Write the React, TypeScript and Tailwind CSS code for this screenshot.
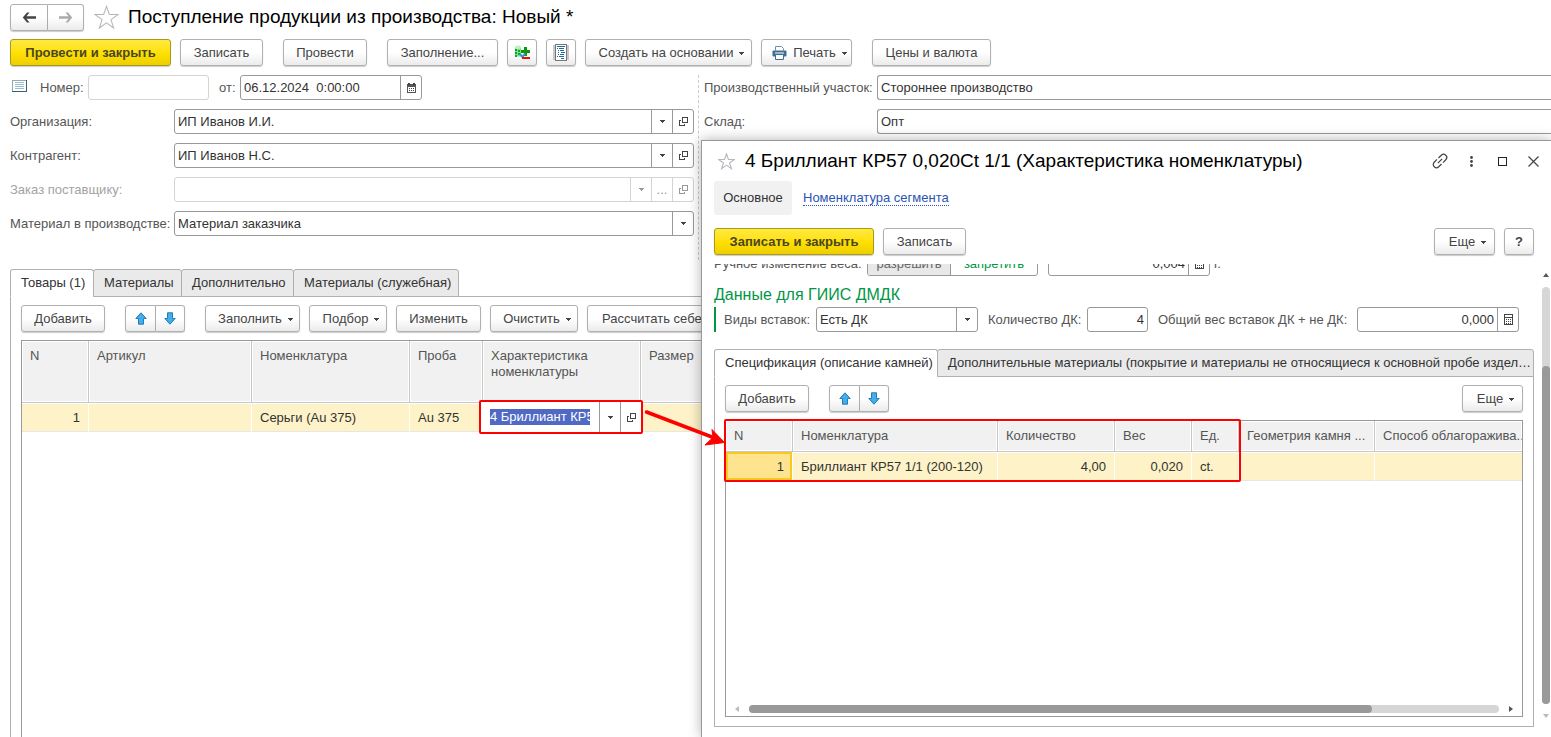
import { ReactNode } from "react";
import clsx from "clsx";

function Caret() {
  return (
    <svg width="5" height="3" viewBox="0 0 5 3" className="shrink-0" shapeRendering="crispEdges">
      <path d="M0 0h5v1h-1v1h-1v1h-1v-1h-1v-1h-1z" fill="currentColor" />
    </svg>
  );
}

function ScrollArrow({ className }: { className: string }) {
  return (
    <span className={clsx("flex size-2 shrink-0 items-center justify-center", className)}>
      <svg width="6" height="4" viewBox="0 0 6 4">
        <path d="M0 0h6L3 4z" fill="currentColor" />
      </svg>
    </span>
  );
}

function OpenIcon() {
  return (
    <svg width="9" height="9" viewBox="0 0 9 9" fill="none" stroke="currentColor" shapeRendering="crispEdges">
      <path d="M3.5 0.5h5v5h-5z" />
      <path d="M2 3.5H0.5v5h5V7" />
    </svg>
  );
}

function CalendarIcon() {
  return (
    <svg width="9" height="10" viewBox="0 0 9 10" shapeRendering="crispEdges">
      <path d="M0 1h9v9H0z" fill="#555" />
      <path d="M1 4h7v5H1z" fill="#fff" />
      <path d="M1 0h2v2H1z M6 0h2v2H6z" fill="#444" />
      <path d="M2 5h1v1H2z M4 5h1v1H4z M6 5h1v1H6z M2 7h1v1H2z M4 7h1v1H4z M6 7h1v1H6z" fill="#444" />
    </svg>
  );
}

function CalculatorIcon() {
  return (
    <svg width="9" height="11" viewBox="0 0 9 11" shapeRendering="crispEdges">
      <path d="M0.5 0.5h8v10h-8z M0 3.5h9" fill="none" stroke="#444" />
      <path d="M2 5h1v1H2z M4 5h1v1H4z M6 5h1v1H6z M2 7h1v1H2z M4 7h1v1H4z M6 7h1v1H6z M2 9h1v1H2z M4 9h1v1H4z M6 9h1v1H6z" fill="#444" />
    </svg>
  );
}

function StarIcon({ size }: { size: number }) {
  return (
    <svg width={size} height={size} viewBox="0 0 24 24" fill="none" stroke="#b4b9be" strokeWidth={size < 20 ? 1.6 : 1}>
      <path d="M12 1.2l2.7 7.9h8.4l-6.8 4.9 2.6 8.1-6.9-5-6.9 5 2.6-8.1L.9 9.1h8.4z" />
    </svg>
  );
}

function BlueArrow({ down }: { down?: boolean }) {
  return (
    <svg width="12" height="13" viewBox="0 0 12 13" className={clsx(down && "rotate-180")}>
      <path d="M6 .8L11.2 6.5H8.5v5.7h-5V6.5H.8z" fill="#41aef0" stroke="#2a7aac" strokeWidth="1" />
    </svg>
  );
}

function NavArrow({ right, color }: { right?: boolean; color: string }) {
  return (
    <svg width="15" height="11" viewBox="0 0 15 11" className={clsx(right && "rotate-180")}>
      <path d="M5 .5h2.500L4.500 4.300H14v2.400H4.500l3 3.800H5L.8 5.500z" fill={color} />
    </svg>
  );
}

function AddRemoveIcon() {
  return (
    <svg width="17" height="16" viewBox="0 0 17 16">
      <path d="M1 2.500h6v9H1z" fill="#7fe08a" />
      <ellipse cx="4" cy="2.300" rx="3" ry="1.800" fill="#b9f2bb" />
      <path d="M1 4h2v2H1zM1 7h2v2H1zM1 10h2v2H1zM4 5h2v2H4zM4 8h2v2H4z" fill="#12a52c" />
      <path d="M10 2h3v3h3v3h-3v3h-3V8H7V5h3z" fill="#0a9a0a" />
      <path d="M6 9l2.500 3L11 8.500" fill="none" stroke="#3c8fd6" strokeWidth="2" />
      <path d="M8 12h8v2H8z" fill="#f20d0d" />
    </svg>
  );
}

function ReportIcon() {
  return (
    <svg width="16" height="17" viewBox="0 0 16 17" shapeRendering="crispEdges">
      <path d="M0 1h2v15H0z M14 1h2v15h-2z" fill="#c9c9c9" />
      <path d="M2 0h12v17H2z" fill="#777" />
      <path d="M3 1h10v15H3z" fill="#fff" />
      <path d="M4 2h8v1H4z M6 4h5v1H6z M7 6h4v1H7z M8 8h4v1H8z M7 10h4v1H7z M6 12h5v1H6z M8 14h3v1H8z" fill="#1d6b96" />
      <path d="M4 4h1v1H4z M5 6h1v1H5z M5 8h1v1H5z M5 10h1v1H5z M4 12h1v1H4z" fill="#1d6b96" />
    </svg>
  );
}

function PrinterIcon() {
  return (
    <svg width="15" height="14" viewBox="0 0 15 14" className="shrink-0">
      <path d="M3.500 4.500v-4h6l2 2v2" fill="#fff" stroke="#7190a8" />
      <path d="M1.500 4.500h12q1 0 1 1v4q0 1-1 1h-12q-1 0-1-1v-4q0-1 1-1z" fill="#3d6f96" />
      <path d="M3 7h9" stroke="#fff" />
      <path d="M3.500 8.500h8v5h-8z" fill="#fff" stroke="#3d6f96" />
    </svg>
  );
}

function ListIcon() {
  return (
    <svg width="15" height="12" viewBox="0 0 15 12" shapeRendering="crispEdges">
      <path d="M.5.5h14v11H.5z" fill="#fff" stroke="#8fa9b8" />
      <path d="M14.500 0v11.500H0" fill="none" stroke="#3a6072" />
      <path d="M3 2.500h9M3 4.500h9M3 6.500h9M3 8.500h9" stroke="#9dbdd0" />
    </svg>
  );
}

function LinkIcon() {
  return (
    <svg width="18" height="18" viewBox="0 0 18 18" fill="none" stroke="currentColor" strokeWidth="1.200" className="shrink-0 -rotate-45">
      <path d="M8 5.800H4a3.200 3.200 0 0 0 0 6.400h4M10 5.800h4a3.200 3.200 0 0 1 0 6.400h-4M6 9h6" />
    </svg>
  );
}

type ButtonProps = {
  children: ReactNode;
  className?: string;
  primary?: boolean;
  menu?: boolean;
  label?: string;
};

function Button({ children, className, primary, menu, label }: ButtonProps) {
  return (
    <button
      type="button"
      aria-label={label}
      className={clsx(
        "flex h-[27px] shrink-0 items-center justify-center rounded-[3px] border whitespace-nowrap shadow-[0_1px_1px_rgba(0,0,0,0.2)]",
        primary
          ? "border-[#a89a1c] bg-linear-to-b from-[#ffe93c] via-[#ffe100] to-[#efce00] font-bold text-[#4a4526]"
          : "border-[#b0b0b0] bg-linear-to-b from-white from-50% to-[#ebebeb] text-[#444]",
        menu && "gap-[6px] pl-[6px]",
        className,
      )}
    >
      {children}
      {menu && <span className="pt-[2px]"><Caret /></span>}
    </button>
  );
}

function MoveButtons() {
  return (
    <div className="ml-5 flex shrink-0">
      <Button label="Вверх" className="w-[31px] rounded-r-none">
        <BlueArrow />
      </Button>
      <Button label="Вниз" className="w-[29px] rounded-l-none border-l-0">
        <BlueArrow down />
      </Button>
    </div>
  );
}

const box = "flex h-[25px] overflow-hidden rounded-[3px] border bg-white";
const sideButton = "flex w-[21px] shrink-0 items-center justify-center border-l";

type SelectBoxProps = {
  id: string;
  value: string;
  disabled?: boolean;
  more?: boolean;
  open?: boolean;
  className?: string;
};

function SelectBox({ id, value, disabled, more, open, className }: SelectBoxProps) {
  const tone = disabled ? "border-[#d4d4d4] text-[#999]" : "border-[#999] text-[#444]";
  return (
    <div className={clsx(box, tone, className)}>
      <div className="relative flex flex-1">
        <select
          id={id}
          disabled={disabled}
          className="w-full appearance-none bg-transparent pr-6 pl-[3px] text-[#333] outline-none"
        >
          <option>{value}</option>
        </select>
        <span className={clsx("pointer-events-none absolute inset-y-0 right-0", sideButton, tone)}>
          <Caret />
        </span>
      </div>
      {more && (
        <button type="button" disabled={disabled} className={clsx(sideButton, tone)}>
          ...
        </button>
      )}
      {open && (
        <button type="button" aria-label="Открыть" disabled={disabled} className={clsx(sideButton, tone)}>
          <OpenIcon />
        </button>
      )}
    </div>
  );
}

type FieldBoxProps = {
  id: string;
  value: string;
  icon?: ReactNode;
  right?: boolean;
  muted?: boolean;
  className?: string;
};

function FieldBox({ id, value, icon, right, muted, className }: FieldBoxProps) {
  return (
    <div className={clsx(box, muted ? "border-[#d4d4d4]" : "border-[#999]", className)}>
      <input
        id={id}
        defaultValue={value}
        className={clsx("w-full min-w-0 flex-1 px-[3px] text-[#333] outline-none", right && "text-right")}
      />
      {icon && (
        <button type="button" aria-label="Выбрать" className={clsx(sideButton, "border-[#999]")}>
          {icon}
        </button>
      )}
    </div>
  );
}

function Tab({ children, active, className }: { children: ReactNode; active?: boolean; className?: string }) {
  return (
    <button
      type="button"
      role="tab"
      aria-selected={!!active}
      className={clsx(
        "h-7 truncate rounded-t-[3px] border border-[#b0b0b0] pl-[10px] text-left text-[#333]",
        active ? "border-b-white bg-white" : "-ml-px bg-[#eaeaea]",
        className,
      )}
    >
      {children}
    </button>
  );
}

function HeadCell({ children, className }: { children?: ReactNode; className?: string }) {
  return (
    <th
      className={clsx(
        "overflow-hidden border-r border-b border-[#c8c8c8] bg-[#f1f1f1] pl-2 text-left font-normal shadow-[inset_0_0_0_1px_white]",
        className,
      )}
    >
      {children}
    </th>
  );
}

type CellProps = {
  children?: ReactNode;
  className?: string;
  selected?: boolean;
};

function Cell({ children, className, selected }: CellProps) {
  return (
    <td
      className={clsx(
        "h-[29px] border-r border-b border-r-white border-b-[#e6e6e6] px-2 pt-[2px] text-[#333]",
        selected
          ? "bg-[#ffe48f] shadow-[inset_0_0_0_2px_#f9c921]"
          : "bg-[#fdf2c8] shadow-[inset_0_1px_0_white]",
        className,
      )}
    >
      {children}
    </td>
  );
}

const orderRows = [
  { id: "org", label: "Организация:", value: "ИП Иванов И.И.", open: true },
  { id: "partner", label: "Контрагент:", value: "ИП Иванов Н.С.", open: true },
  { id: "order", label: "Заказ поставщику:", value: "", open: true, more: true, disabled: true },
  { id: "material", label: "Материал в производстве:", value: "Материал заказчика" },
];

function OrderForm() {
  return (
    <div className="mt-[9px] flex">
      <div className="flex w-[689px] shrink-0 flex-col gap-[9px] border-r border-dashed border-[#ccc] pr-1 pb-6">
        <div className="flex items-center">
          <span className="w-[30px] pb-1 pl-[2px]">
            <ListIcon />
          </span>
          <label htmlFor="number" className="w-12">Номер:</label>
          <FieldBox id="number" value="" muted className="w-[121px]" />
          <label htmlFor="date" className="w-[31px] pl-[10px]">от:</label>
          <FieldBox id="date" value="06.12.2024  0:00:00" icon={<CalendarIcon />} className="w-[182px]" />
        </div>
        {orderRows.map((row) => (
          <div key={row.id} className="flex items-center">
            <label
              htmlFor={row.id}
              className={clsx("w-[164px] shrink-0 whitespace-nowrap", row.disabled && "text-[#a3a3a3]")}
            >
              {row.label}
            </label>
            <SelectBox
              id={row.id}
              value={row.value}
              open={row.open}
              more={row.more}
              disabled={row.disabled}
              className="flex-1"
            />
          </div>
        ))}
      </div>
      <div className="flex flex-1 flex-col gap-[9px] pl-[5px]">
        <div className="flex items-center">
          <label htmlFor="area" className="w-[173px] shrink-0 whitespace-nowrap">Производственный участок:</label>
          <FieldBox id="area" value="Стороннее производство" className="flex-1 rounded-r-none border-r-0" />
        </div>
        <div className="flex items-center">
          <label htmlFor="stock" className="w-[173px] shrink-0">Склад:</label>
          <FieldBox id="stock" value="Опт" className="flex-1 rounded-r-none border-r-0" />
        </div>
      </div>
    </div>
  );
}

function GoodsTable() {
  return (
    <table className="w-full table-fixed border-separate border-spacing-0">
      <colgroup>
        <col className="w-[67px]" />
        <col className="w-[163px]" />
        <col className="w-[158px]" />
        <col className="w-[73px]" />
        <col className="w-[158px]" />
        <col />
      </colgroup>
      <thead>
        <tr className="h-[62px] align-top leading-4">
          <HeadCell className="pt-[7px]">N</HeadCell>
          <HeadCell className="pt-[7px]">Артикул</HeadCell>
          <HeadCell className="pt-[7px]">Номенклатура</HeadCell>
          <HeadCell className="pt-[7px]">Проба</HeadCell>
          <HeadCell className="pt-[7px]">Характеристика номенклатуры</HeadCell>
          <HeadCell className="pt-[7px]">Размер</HeadCell>
        </tr>
      </thead>
      <tbody>
        <tr>
          <Cell className="text-right">1</Cell>
          <Cell />
          <Cell>Серьги (Au 375)</Cell>
          <Cell>Au 375</Cell>
          <Cell className="relative">
            <div className="absolute -top-[3px] -left-1 flex h-[34px] w-[164px] rounded-[2px] border-2 border-[#f00] bg-white pl-[9px] text-[#444]">
              <div className="flex flex-1 items-center">
                <input
                  aria-label="Характеристика номенклатуры"
                  defaultValue="4 Бриллиант КР57 0,020Ct 1/1"
                  className="h-4 w-[100px] bg-[#4f69c4] text-white outline-none"
                />
              </div>
              <button type="button" aria-label="Список" className={clsx(sideButton, "border-[#999]")}>
                <Caret />
              </button>
              <button type="button" aria-label="Открыть" className={clsx(sideButton, "border-[#999]")}>
                <OpenIcon />
              </button>
            </div>
          </Cell>
          <Cell />
        </tr>
      </tbody>
    </table>
  );
}

function StonesTable() {
  return (
    <table className="w-full table-fixed border-separate border-spacing-0 whitespace-nowrap">
      <colgroup>
        <col className="w-[67px]" />
        <col className="w-[205px]" />
        <col className="w-[117px]" />
        <col className="w-[77px]" />
        <col className="w-[47px]" />
        <col className="w-[136px]" />
        <col />
      </colgroup>
      <thead>
        <tr className="h-[31px]">
          <HeadCell>N</HeadCell>
          <HeadCell>Номенклатура</HeadCell>
          <HeadCell>Количество</HeadCell>
          <HeadCell>Вес</HeadCell>
          <HeadCell>Ед.</HeadCell>
          <HeadCell>Геометрия камня ...</HeadCell>
          <HeadCell className="border-r-0">Способ облагоражива...</HeadCell>
        </tr>
      </thead>
      <tbody>
        <tr>
          <Cell selected className="text-right">1</Cell>
          <Cell>Бриллиант КР57 1/1 (200-120)</Cell>
          <Cell className="text-right">4,00</Cell>
          <Cell className="text-right">0,020</Cell>
          <Cell>ct.</Cell>
          <Cell />
          <Cell className="border-r-0" />
        </tr>
      </tbody>
    </table>
  );
}

const windowButton = "flex size-4 items-center justify-center";

function DialogHeader() {
  return (
    <>
      <div className="flex h-10 items-center pr-[9px] pl-1">
        <StarIcon size={17} />
        <h2 className="ml-[10px] flex-1 text-[19px] whitespace-nowrap text-black">
          4 Бриллиант КР57 0,020Ct 1/1 (Характеристика номенклатуры)
        </h2>
        <div className="flex items-center gap-[15px] text-[#444]">
          <button type="button" aria-label="Ссылка" className={windowButton}>
            <LinkIcon />
          </button>
          <button type="button" aria-label="Меню" className={windowButton}>
            <svg width="3" height="11" viewBox="0 0 3 11" fill="currentColor">
              <circle cx="1.500" cy="1.500" r="1.400" />
              <circle cx="1.500" cy="5.500" r="1.400" />
              <circle cx="1.500" cy="9.500" r="1.400" />
            </svg>
          </button>
          <button type="button" aria-label="Развернуть" className={windowButton}>
            <span className="block size-[9px] border border-[#222]" />
          </button>
          <button type="button" aria-label="Закрыть" className={windowButton}>
            <svg width="11" height="11" viewBox="0 0 11 11" stroke="currentColor" strokeWidth="1.200">
              <path d="M.5.5l10 10M10.500.5l-10 10" />
            </svg>
          </button>
        </div>
      </div>
      <nav className="flex items-center gap-[11px]">
        <span className="flex h-[34px] w-[78px] items-center justify-center rounded-[3px] bg-[#f1f1f1] text-[#333]">
          Основное
        </span>
        <a href="#segment" className="border-b border-dotted border-[#2a54b4] leading-[14px] text-[#2a54b4]">
          Номенклатура сегмента
        </a>
      </nav>
      <div className="mt-[13px] flex gap-[9px] pr-4">
        <Button primary className="w-[160px]">Записать и закрыть</Button>
        <Button className="w-[83px]">Записать</Button>
        <Button menu className="ml-auto w-[61px]">Еще</Button>
        <Button className="w-[30px] font-bold">?</Button>
      </div>
    </>
  );
}

function VerticalScroll() {
  return (
    <div className="flex w-2 shrink-0 flex-col items-center pt-[7px] pb-[17px]">
      <ScrollArrow className="rotate-180 text-[#555]" />
      <div className="mt-2 flex w-full flex-1 flex-col rounded-full bg-[#d6d6d6]">
        <div className="mt-auto h-[81%] rounded-full bg-[#999]" />
      </div>
      <ScrollArrow className="mt-2 text-[#bbb]" />
    </div>
  );
}

function CharacteristicDialog() {
  return (
    <section
      role="dialog"
      className="absolute top-[140px] right-0 bottom-0 left-[701px] flex flex-col border-t border-l border-[#999] bg-white pr-px pl-3 shadow-[0_0_12px_rgba(0,0,0,0.3)]"
    >
      <DialogHeader />
      <div className="mt-[9px] flex min-h-0 flex-1">
        <div className="flex min-w-0 flex-1 flex-col pr-2 pb-[10px]">
          <div className="flex h-3 shrink-0 items-end overflow-hidden">
            <span className="flex h-[25px] w-[153px] items-center">Ручное изменение веса:</span>
            <div className="flex h-[25px] overflow-hidden rounded-[3px] border border-[#999]">
              <button type="button" className="w-[83px] border-r border-[#999] bg-[#e8e8e8] text-[#666]">
                разрешить
              </button>
              <button type="button" className="w-[86px] text-[#009646]">запретить</button>
            </div>
            <FieldBox id="weight" value="0,004" right icon={<CalculatorIcon />} className="ml-[10px] w-[162px]" />
            <label htmlFor="weight" className="flex h-[25px] items-center pl-1">г.</label>
          </div>
          <h3 className="mt-2 text-base leading-[22px] text-[#009646]">Данные для ГИИС ДМДК</h3>
          <div className="mt-px flex items-center border-l-2 border-[#009646] pl-2">
            <label htmlFor="kinds" className="w-[92px] shrink-0">Виды вставок:</label>
            <SelectBox id="kinds" value="Есть ДК" className="w-[162px]" />
            <label htmlFor="count" className="w-[109px] pl-[10px] whitespace-nowrap">Количество ДК:</label>
            <FieldBox id="count" value="4" right className="w-[61px]" />
            <label htmlFor="total" className="w-[209px] pl-[10px] whitespace-nowrap">Общий вес вставок ДК + не ДК:</label>
            <FieldBox id="total" value="0,000" right icon={<CalculatorIcon />} className="w-[162px]" />
          </div>
          <div role="tablist" className="z-10 mt-[17px] -mb-px flex">
            <Tab active className="w-[224px] shrink-0">Спецификация (описание камней)</Tab>
            <Tab className="min-w-0 flex-1">
              Дополнительные материалы (покрытие и материалы не относящиеся к основной пробе изделия)
            </Tab>
          </div>
          <div className="flex flex-1 flex-col border border-[#b0b0b0] px-[10px] pt-2 pb-[9px]">
            <div className="flex">
              <Button className="w-[84px]">Добавить</Button>
              <MoveButtons />
              <Button menu className="ml-auto w-[61px]">Еще</Button>
            </div>
            <div className="relative mt-2 flex flex-1 flex-col border border-[#999]">
              <StonesTable />
              <div className="mt-auto mb-[3px] flex items-center gap-2 px-[7px] text-[#555]">
                <ScrollArrow className="rotate-90 text-[#bbb]" />
                <div className="flex h-2 flex-1 rounded-full bg-[#d6d6d6]">
                  <div className="w-[83%] rounded-full bg-[#999]" />
                </div>
                <ScrollArrow className="-rotate-90" />
              </div>
              <div className="pointer-events-none absolute -top-[2px] -left-[2px] h-[63px] w-[517px] rounded-[2px] border-2 border-[#f00]" />
            </div>
          </div>
        </div>
        <VerticalScroll />
      </div>
    </section>
  );
}

export default function App() {
  return (
    <main className="relative flex h-screen flex-col overflow-hidden bg-white pt-[5px] pl-[10px] font-['Liberation_Sans',Arial,sans-serif] text-[13px] text-[#555]">
      <header className="flex h-[25px] items-center">
        <div className="flex">
          <Button label="Назад" className="h-[25px] w-[38px] rounded-r-none">
            <NavArrow color="#444" />
          </Button>
          <Button label="Вперед" className="h-[25px] w-[36px] rounded-l-none border-l-0">
            <NavArrow right color="#aaa" />
          </Button>
        </div>
        <span className="ml-[10px]">
          <StarIcon size={25} />
        </span>
        <h1 className="ml-[9px] text-[19px] text-black">Поступление продукции из производства: Новый *</h1>
      </header>

      <div className="mt-[9px] flex">
        <Button primary className="w-[161px]">Провести и закрыть</Button>
        <Button className="ml-[9px] w-[83px]">Записать</Button>
        <Button className="ml-5 w-[84px]">Провести</Button>
        <Button className="ml-5 w-[111px]">Заполнение...</Button>
        <Button label="Добавить строки" className="ml-[9px] w-[30px]">
          <AddRemoveIcon />
        </Button>
        <Button label="Отчет" className="ml-[9px] w-[30px]">
          <ReportIcon />
        </Button>
        <Button menu className="ml-[9px] w-[167px]">Создать на основании</Button>
        <Button menu className="ml-[9px] w-[91px]">
          <PrinterIcon />
          Печать
        </Button>
        <Button className="ml-5 w-[119px]">Цены и валюта</Button>
      </div>

      <OrderForm />

      <div role="tablist" className="z-10 mt-[9px] -mb-px flex">
        <Tab active className="w-[84px]">Товары (1)</Tab>
        <Tab className="w-[89px]">Материалы</Tab>
        <Tab className="w-[113px]">Дополнительно</Tab>
        <Tab className="w-[166px]">Материалы (служебная)</Tab>
      </div>
      <div className="flex flex-1 flex-col border-t border-l border-[#b0b0b0] pt-2 pl-[10px]">
        <div className="flex">
          <Button className="w-[84px]">Добавить</Button>
          <MoveButtons />
          <Button menu className="ml-5 w-[95px]">Заполнить</Button>
          <Button menu className="ml-[9px] w-[78px]">Подбор</Button>
          <Button className="ml-[9px] w-[85px]">Изменить</Button>
          <Button menu className="ml-[9px] w-[88px]">Очистить</Button>
          <Button className="ml-[9px] w-[192px]">Рассчитать себестоимость</Button>
        </div>
        <div className="mt-2 flex-1 border-t border-l border-[#999]">
          <GoodsTable />
        </div>
      </div>

      <CharacteristicDialog />

      <svg
        width="84"
        height="44"
        viewBox="0 0 84 44"
        className="pointer-events-none absolute top-[404px] left-[642px] z-20"
      >
        <path d="M4.500 8L70 33" stroke="#f00" strokeWidth="3.500" strokeLinecap="round" />
        <path d="M82.500 38.500L70 25.500l1 8-8 7.500z" fill="#f00" stroke="#f00" strokeLinejoin="round" />
      </svg>
    </main>
  );
}
